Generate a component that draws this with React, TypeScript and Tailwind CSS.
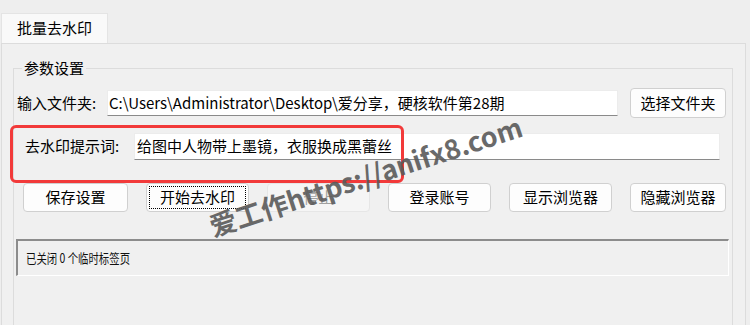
import React from "react";

const font = { fontFamily: '"Noto Sans CJK SC", "Noto Sans", sans-serif' };

function Btn({ children, w, focus, disabled }: { children: React.ReactNode; w: string; focus?: boolean; disabled?: boolean }) {
  return (
    <div
      className={`${w} h-[29px] shrink-0 rounded-[4px] border ${disabled ? "border-[#e6e6e6] bg-[#f5f5f5] text-[#a0a0a0]" : "border-[#d0d0d0] bg-[#fdfdfd] text-black"} flex items-center justify-center text-[15px] p-[2px]`}
    >
      <div className={`w-full h-full flex items-center justify-center ${focus ? "border border-dotted border-black" : ""}`}>{children}</div>
    </div>
  );
}

export default function App() {
  return (
    <div className="w-[750px] h-[325px] bg-[#eeeeee] relative overflow-hidden flex flex-col text-black" style={font}>
      {/* tab strip */}
      <div className="pt-[13px] pl-[1px] flex">
        <div className="w-[107px] h-[30px] bg-[#f9f9f9] border-t border-l border-r border-[#e4e4e4] flex items-center pl-[15px] text-[15px]">
          批量去水印
        </div>
      </div>
      {/* panel */}
      <div className="ml-[1px] w-[745px] flex-1 border-t border-l border-r border-[#dcdcdc] bg-[#f0f0f0] pl-[11px] pt-[24px]">
        <div className="relative w-[720px] h-[300px] border border-[#dcdcdc] pt-[19px]">
          <div className="absolute left-[8px] top-[-11px] px-[2px] bg-[#f0f0f0] text-[15px] leading-[20px]">参数设置</div>
          {/* row 1 */}
          <div className="flex items-center h-[30px] pl-[3px]">
            <div className="w-[90px] text-[15px]">输入文件夹:</div>
            <div className="w-[511px] h-[26px] bg-white border border-[#ececec] border-b-[#8a8a8a] flex items-center pl-[1px] text-[15px] whitespace-nowrap overflow-hidden">
              C:\Users\Administrator\Desktop\爱分享，硬核软件第28期
            </div>
            <div className="ml-[12px] w-[96px] h-[30px] rounded-[4px] border border-[#d0d0d0] bg-[#fdfdfd] flex items-center justify-center text-[15px]">
              选择文件夹
            </div>
          </div>
          {/* row 2 */}
          <div className="flex items-center h-[27px] mt-[15px] pl-[11px]">
            <div className="w-[109px] text-[15px]">去水印提示词:</div>
            <div className="w-[586px] h-[27px] bg-white border border-[#ececec] border-b-[#8a8a8a] flex items-center pl-[2px] text-[15px] whitespace-nowrap overflow-hidden">
              给图中人物带上墨镜，衣服换成黑蕾丝
            </div>
          </div>
          {/* row 3 */}
          <div className="flex mt-[23px] pl-[9px] gap-[18px]">
            <Btn w="w-[105px]">保存设置</Btn>
            <Btn w="w-[103px]" focus>开始去水印</Btn>
            <Btn w="w-[103px]" disabled>停止</Btn>
            <Btn w="w-[103px]">登录账号</Btn>
            <Btn w="w-[103px]">显示浏览器</Btn>
            <Btn w="w-[96px]">隐藏浏览器</Btn>
          </div>
          {/* log */}
          <div className="ml-[2px] mt-[27px] w-[713px] h-[37px] border-t-2 border-l-2 border-t-[#8c8c8c] border-l-[#8c8c8c] border-b border-r border-b-white border-r-white bg-[#f0f0f0] flex items-center pl-[8px] text-[13px] text-[#111]">
            <span className="inline-block origin-left scale-x-[0.8] whitespace-nowrap">已关闭 0 个临时标签页</span>
          </div>
        </div>
      </div>

      {/* red annotation */}
      <div className="absolute left-[10px] top-[125px] w-[394px] h-[58px] border-[3px] border-[#f23a3a] rounded-[6px]" />

      {/* watermark */}
      <div
        className="absolute left-[214px] top-[212px] origin-bottom-left rotate-[-18deg] text-[27px] leading-none font-bold text-[#5a5a5a] whitespace-nowrap opacity-90"
        style={{ fontFamily: '"Noto Sans CJK SC", "DejaVu Sans", sans-serif' }}
      >
        爱工作https://anifx8.com
      </div>
    </div>
  );
}
